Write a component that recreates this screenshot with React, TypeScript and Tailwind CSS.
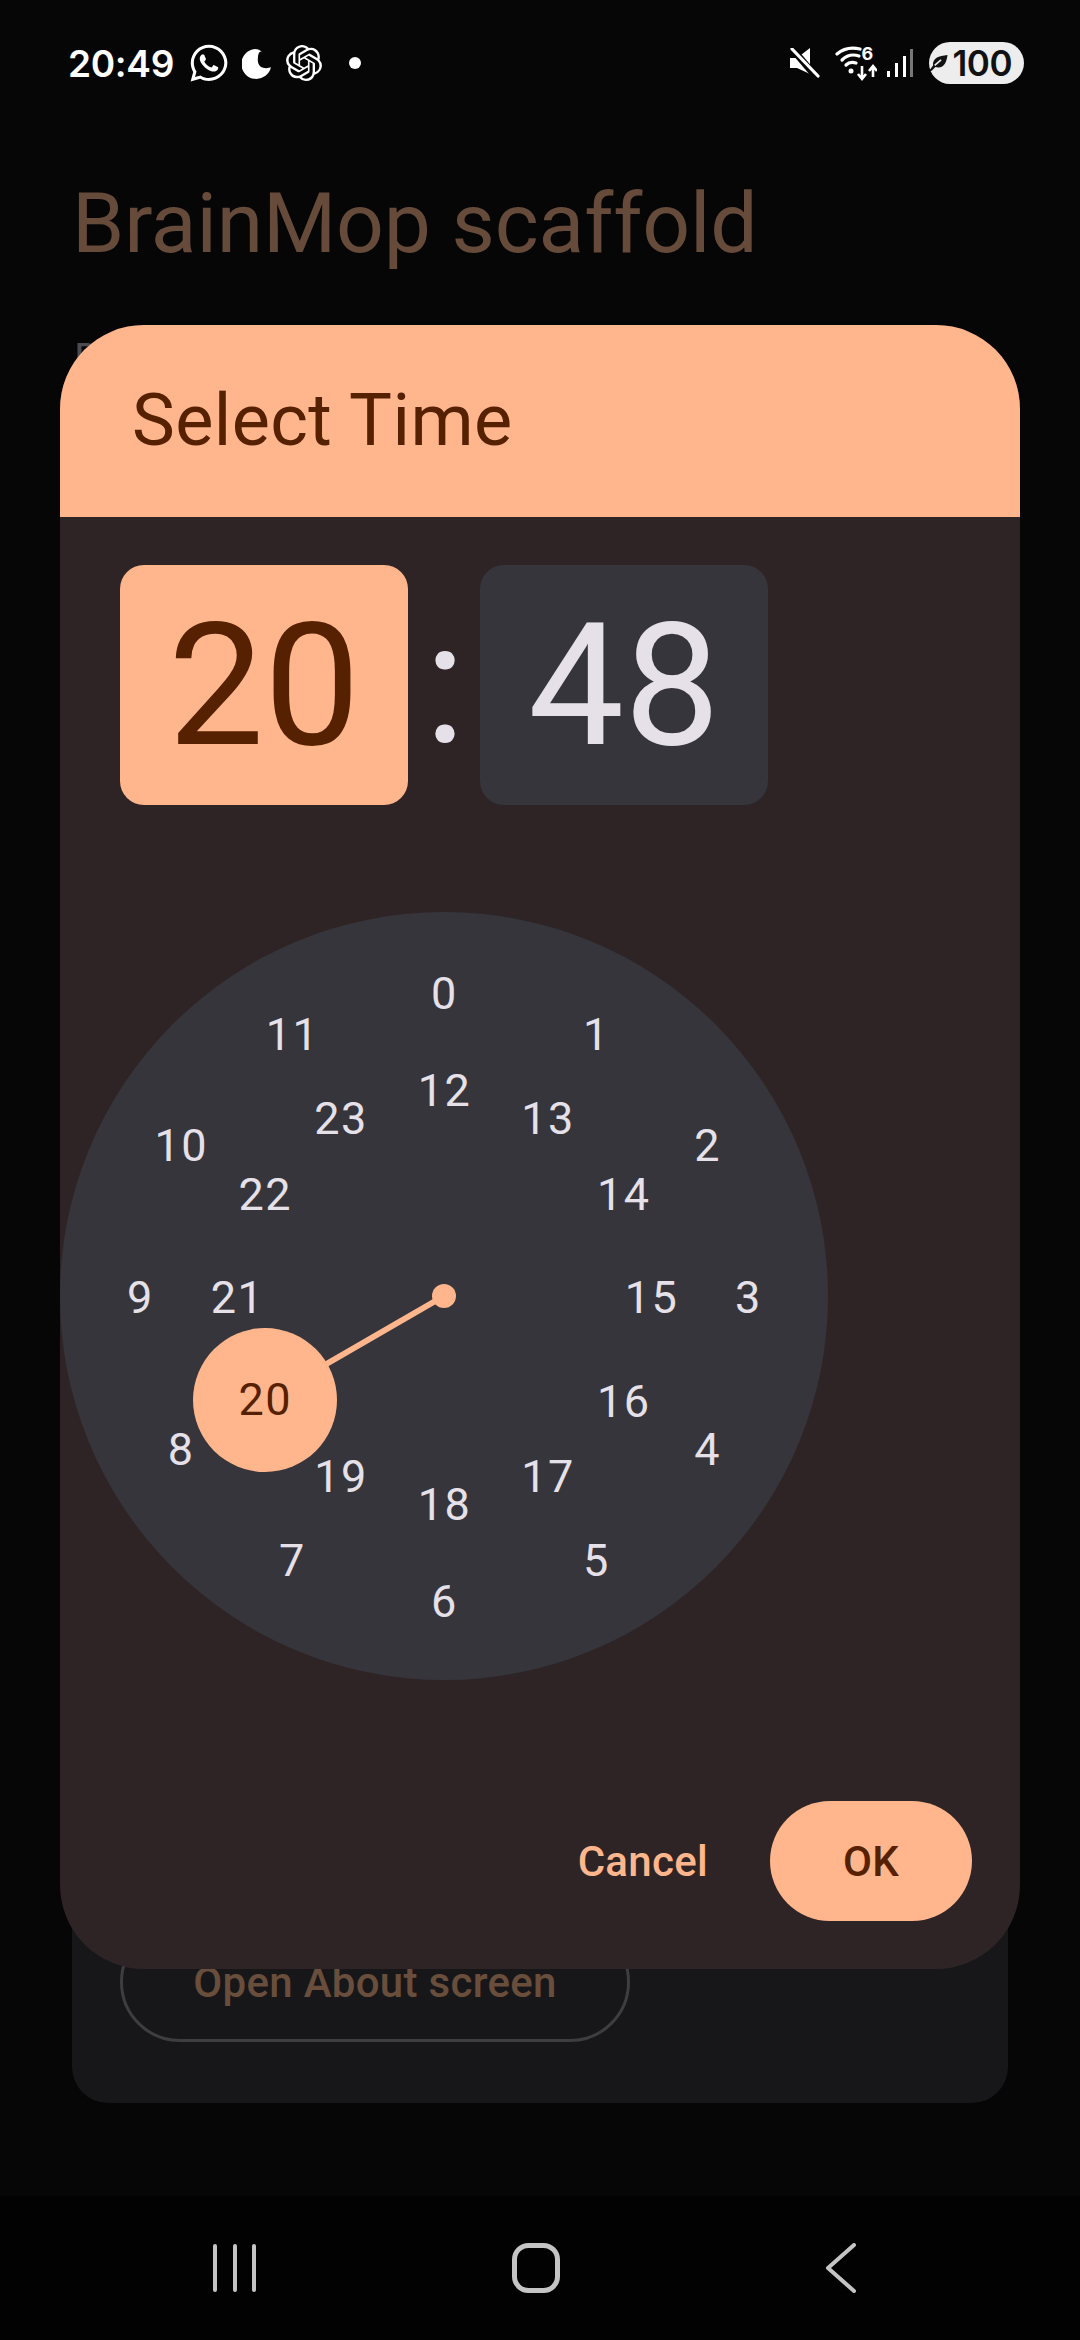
import React from "react";
import { FaWhatsapp } from "react-icons/fa";
import { SiOpenai } from "react-icons/si";

const outer = ["0", "1", "2", "3", "4", "5", "6", "7", "8", "9", "10", "11"];
const inner = ["12", "13", "14", "15", "16", "17", "18", "19", "20", "21", "22", "23"];
const C = 384;

function Dial({ label, radius, index, selected }: { label: string; radius: number; index: number; selected?: boolean }) {
  const a = (index * Math.PI) / 6;
  const x = C + radius * Math.sin(a);
  const y = C - radius * Math.cos(a);
  return (
    <span
      className={
        selected
          ? "absolute flex h-[144px] w-[144px] -translate-x-1/2 -translate-y-1/2 items-center justify-center rounded-full bg-[#ffb68c] text-[#552100]"
          : "absolute -translate-x-1/2 -translate-y-1/2 text-[#e6e1e9]"
      }
      style={selected ? { left: x + 0.5, top: y } : { left: x + 0.5, top: y + 2 }}
    >
      {label}
    </span>
  );
}

function Clock() {
  return (
    <div className="relative h-[768px] w-[768px] rounded-full bg-[#36353b] text-[45px] leading-[60px] tracking-[1.5px]">
      <svg className="absolute left-0 top-0" width="768" height="768" viewBox="0 0 768 768">
        <line x1="384" y1="384" x2="205" y2="487.5" stroke="#ffb68c" strokeWidth="6" />
        <circle cx="384" cy="384" r="12" fill="#ffb68c" />
      </svg>
      {outer.map((l, i) => (
        <Dial key={l} label={l} radius={304} index={i} />
      ))}
      {inner.map((l, i) => (
        <Dial key={l} label={l} radius={207} index={i} selected={l === "20"} />
      ))}
    </div>
  );
}

function StatusBar() {
  return (
    <div className="flex h-[126px] w-full items-center pl-[68px] pr-[56px] text-white">
      <span className="w-[120px] font-['Inter',sans-serif] text-[37px] font-semibold leading-none tracking-[-0.3px]">20:49</span>
      <FaWhatsapp className="h-[42px] w-[42px]" />
      <svg className="ml-[12px]" width="30" height="32" viewBox="0 0 30 32">
        <path d="M13 2 A15 15 0 1 0 29 20 C26 22 14 23 16 10 C16 7 18 3 20 5 C18 3 16 2 13 2 Z" fill="#fff" />
      </svg>
      <SiOpenai className="ml-[14px] h-[36px] w-[36px]" />
      <span className="ml-[27px] h-[12px] w-[12px] rounded-full bg-white" />
      <svg className="ml-auto" width="30" height="30" viewBox="0 0 30 30">
        <path d="M0 10 H7 L20 0 V26 L7 20 H0 Z" fill="#fff" />
        <path d="M-1 -3 L28 31" stroke="#060606" strokeWidth="7" />
        <path d="M2 1 L28 28" stroke="#fff" strokeWidth="3.2" strokeLinecap="round" />
      </svg>
      <svg className="ml-[15px]" width="42" height="38" viewBox="0 0 42 38" fill="none" stroke="#fff">
        <path d="M2 10 C9 4 17 3 25 5" strokeWidth="3.2" strokeLinecap="round" />
        <path d="M7 16 C12 11 18 10 24 12" strokeWidth="3.2" strokeLinecap="round" />
        <path d="M11 21 C14 18 18 18 21 19" strokeWidth="3.2" strokeLinecap="round" />
        <circle cx="16" cy="27" r="2.5" fill="#fff" stroke="none" />
        <path d="M27 22 V34 M23 30 L27 35 L31 30" strokeWidth="2.6" />
        <path d="M38 33 V23 M34 27 L38 22 L42 27" strokeWidth="2.6" />
        <text x="26.5" y="16" fontSize="18" fontWeight="700" fill="#fff" stroke="none" fontFamily="Inter, sans-serif">6</text>
      </svg>
      <svg className="ml-[10px]" width="26" height="30" viewBox="0 0 26 30">
        <rect x="0" y="23" width="3" height="6" fill="#fff" />
        <rect x="8" y="15" width="3" height="14" fill="#fff" />
        <rect x="16" y="8" width="3" height="21" fill="#fff" />
        <rect x="23" y="1" width="3" height="28" fill="#777" />
      </svg>
      <div className="ml-[16px] flex h-[42px] w-[95px] items-center justify-end rounded-full bg-[#ededed] pr-[12px] font-['Inter',sans-serif] text-[35px] font-semibold leading-none tracking-[-0.5px] text-[#111]">
        <svg className="mr-[5px]" width="23" height="20" viewBox="0 0 23 20">
          <path d="M0 20 L5 13 C4 4 12 1 23 0 C22 9 18 18 8 15 L3 20 Z" fill="#111" />
          <path d="M7 13 L15 6" stroke="#ededed" strokeWidth="2" />
        </svg>
        100
      </div>
    </div>
  );
}

function NavBar() {
  return (
    <div className="flex h-[144px] w-full items-start bg-[#020202] pt-[47px]">
      <svg className="ml-[212px]" width="44" height="50" viewBox="0 0 44 50" stroke="#c4c4c4" strokeWidth="4" strokeLinecap="round">
        <path d="M3 3 V47 M23 3 V47 M42 3 V47" />
      </svg>
      <svg className="ml-[256px]" width="48" height="50" viewBox="0 0 48 50" fill="none" stroke="#c4c4c4" strokeWidth="5">
        <rect x="2.5" y="2.5" width="43" height="45" rx="14" />
      </svg>
      <svg className="ml-[265px]" width="32" height="50" viewBox="0 0 32 50" fill="none" stroke="#c4c4c4" strokeWidth="4" strokeLinecap="round" strokeLinejoin="round">
        <path d="M29 2 L3 25 L29 48" />
      </svg>
    </div>
  );
}

export default function App() {
  return (
    <div className="relative flex h-[2340px] w-[1080px] flex-col overflow-hidden bg-[#060606] font-['Roboto',sans-serif]">
      <StatusBar />
      <h1 className="ml-[72px] mt-[48px] text-[84px] font-normal leading-[100px] tracking-[-0.15px] text-[#674b3a]">BrainMop scaffold</h1>
      <p className="ml-[74px] mt-[55px] text-[42px] leading-[60px] text-[#4b4b50]">Draft</p>
      <div className="mx-[72px] mb-[93px] mt-auto flex h-[400px] flex-col justify-end rounded-[36px] bg-[#17171a] px-[48px] pb-[61px]">
        <div className="flex h-[120px] w-[510px] items-center justify-center rounded-full border-[3px] border-[#3e3e41] text-[42px] font-medium tracking-[0.3px] text-[#6a4e3c]">
          Open About screen
        </div>
      </div>
      <NavBar />

      <div className="absolute left-[60px] top-[325px] flex h-[1644px] w-[960px] flex-col overflow-hidden rounded-[84px] bg-[#2e2425]">
        <div className="flex h-[192px] items-center bg-[#ffb68c] pl-[72px] text-[72px] leading-none tracking-[0.4px] text-[#552100]">Select Time</div>
        <div className="ml-[60px] mt-[48px] flex items-center">
          <div className="flex h-[240px] w-[288px] items-center justify-center rounded-[24px] bg-[#ffb68c] text-[171px] leading-none text-[#552100]">20</div>
          <div className="flex h-[240px] w-[72px] items-center justify-center pb-[4px] pl-[2px] text-[171px] leading-none text-[#e6e1e9]">:</div>
          <div className="flex h-[240px] w-[288px] items-center justify-center rounded-[24px] bg-[#36353b] text-[171px] leading-none text-[#e6e1e9]">48</div>
        </div>
        <div className="mt-[107px]">
          <Clock />
        </div>
        <div className="mt-[121px] flex items-center justify-end pr-[48px]">
          <span className="mr-[62px] text-[42px] font-medium tracking-[0.3px] text-[#ffb68c]">Cancel</span>
          <div className="flex h-[120px] w-[202px] items-center justify-center rounded-full bg-[#ffb68c] text-[42px] font-medium tracking-[0.3px] text-[#552100]">OK</div>
        </div>
      </div>
    </div>
  );
}
